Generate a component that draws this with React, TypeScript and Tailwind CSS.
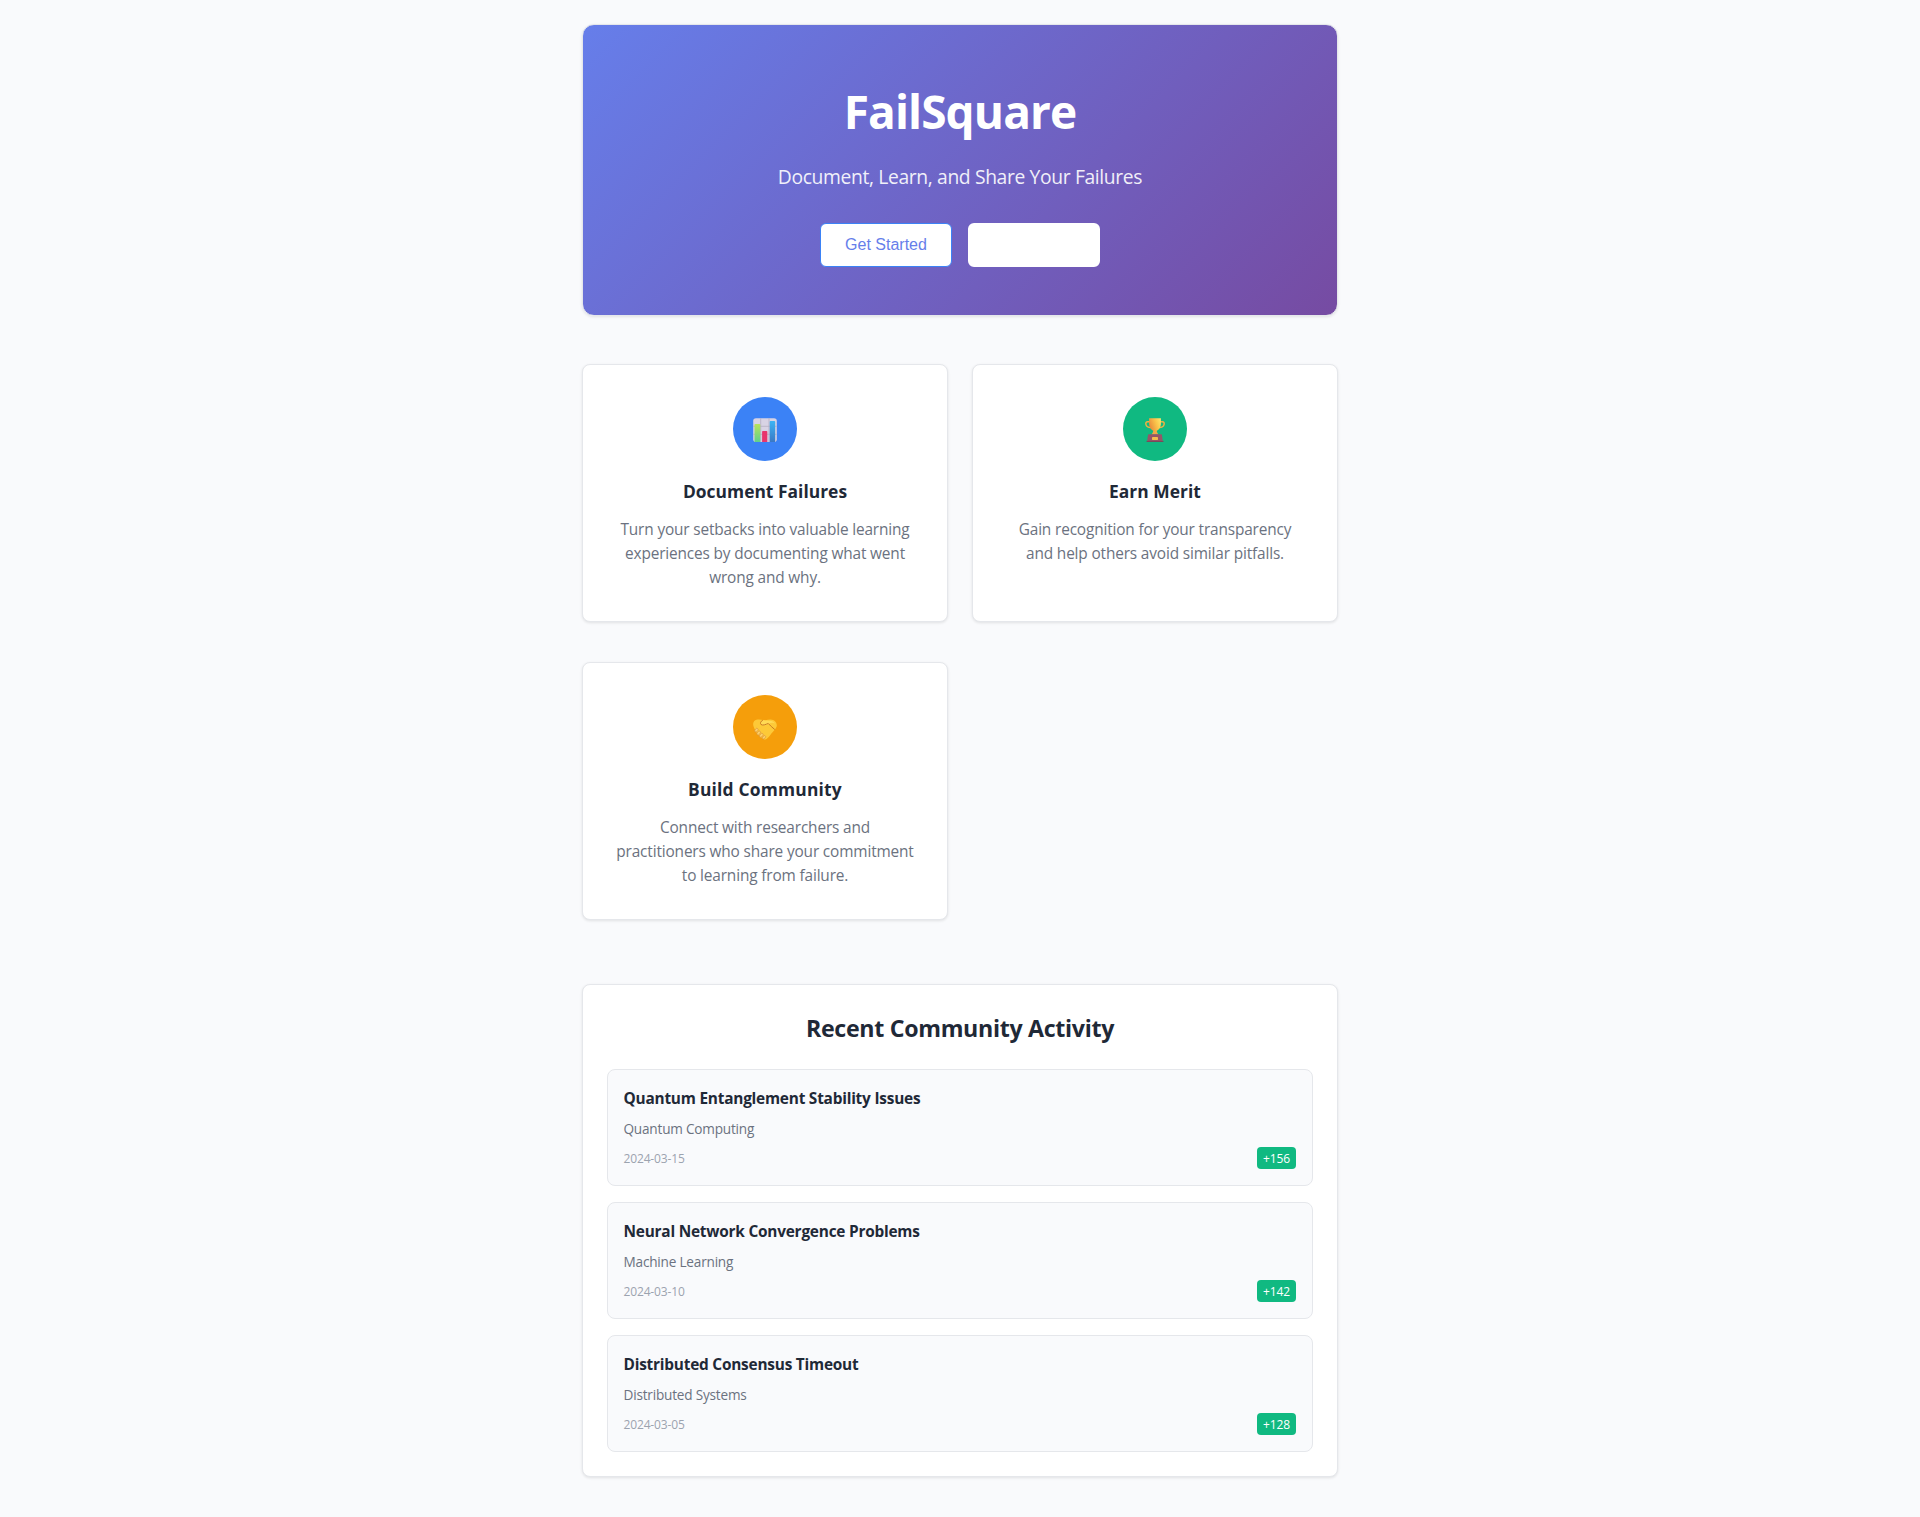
import React from 'react';

function ChartIcon() {
  return (
    <svg width="24" height="24" viewBox="0 0 24 24" aria-hidden="true">
      <defs>
        <linearGradient id="barGreen" x1="0" y1="0" x2="0" y2="1">
          <stop offset="0" stopColor="#b9e35a" />
          <stop offset="1" stopColor="#5fd08c" />
        </linearGradient>
        <linearGradient id="barBlue" x1="0" y1="0" x2="0" y2="1">
          <stop offset="0" stopColor="#3cb4f5" />
          <stop offset="1" stopColor="#3a78c4" />
        </linearGradient>
      </defs>
      <rect x="0.2" y="0.2" width="23.6" height="23.8" rx="2.8" fill="#d8d3e4" />
      <path d="M7.7 0.2V24M16 0.2V24M0.2 8.3H23.8M0.2 16.3H23.8" stroke="#b5afc2" strokeWidth="0.8" />
      <path d="M1.5 6.8a.8.8 0 0 1 .8-.8h4.2a.8.8 0 0 1 .8.8V24H1.5z" fill="url(#barGreen)" />
      <path d="M9.1 13.8a.8.8 0 0 1 .8-.8h3.6a.8.8 0 0 1 .8.8V24H9.1z" fill="#e8356c" />
      <path d="M16.7 3.8a.8.8 0 0 1 .8-.8h3.9a.8.8 0 0 1 .8.8V24h-5.5z" fill="url(#barBlue)" />
    </svg>
  );
}

function TrophyIcon() {
  return (
    <svg width="24" height="24" viewBox="0 0 24 24" aria-hidden="true">
      <defs>
        <linearGradient id="cup" x1="0" y1="0.6" x2="1" y2="0.2">
          <stop offset="0" stopColor="#e8893a" />
          <stop offset="0.6" stopColor="#fac54b" />
          <stop offset="1" stopColor="#fde46a" />
        </linearGradient>
      </defs>
      <path
        d="M6.8 3.7H4.6C3 3.7 2.6 5.2 2.9 6.4c.5 2 2.6 3.2 5 3.2M17.2 3.7h2.2c1.6 0 2 1.5 1.7 2.7-.5 2-2.6 3.2-5 3.2"
        fill="none"
        stroke="#eeb043"
        strokeWidth="1.5"
      />
      <path d="M10.4 11h3.2c0 2.7.5 3.8 1.9 5.5h-7c1.4-1.7 1.9-2.8 1.9-5.5z" fill="#f0a945" />
      <path d="M6.1.2h11.8v5.3c0 4.4-2.7 7.6-5.9 7.6s-5.9-3.2-5.9-7.6z" fill="url(#cup)" />
      <path d="M5.5 16.3h13c.7 0 1.2 7.5 1.4 7.5H4.1c.2 0 .7-7.5 1.4-7.5z" fill="#965568" />
      <path d="M3.5 22.9h17v1h-17z" fill="#7b4659" />
      <rect x="9" y="19" width="6" height="2.9" rx="0.4" fill="#f5bd4c" />
    </svg>
  );
}

function HandshakeIcon() {
  return (
    <svg width="24" height="24" viewBox="0 0 24 24" aria-hidden="true">
      <path
        d="M3.4 3.8C6 3 9.5 3.8 12 4.5c3-1 6.3-1.4 8.7-.3 2.5 1.2 3.6 4.4 2.9 6.5-.8 2.5-3.6 4.6-5.2 6.8-1.4 2-2.9 4-4.9 5.6-1 .8-2.3.5-3.5-.4-3-2.1-6.3-4.7-7.6-8C1.2 11.8-.1 9.6.2 7.5c.2-1.8 1.5-3.2 3.2-3.7z"
        fill="#fdc938"
      />
      <path
        d="M8.6 4.7c2.4-.9 5.5.2 7.6.1 2.8-.1 4.7.9 5.6 2.6-1.6-.7-3.4-.8-5.3.1-2.3 1.1-4.2 2.4-7 1.9-1.8-.4-2.5-2.9-.9-4.7z"
        fill="#ffda55"
      />
      <path
        d="M9.4 4.5C7.4 5.4 7 7.5 8 8.5c2 1.6 5.2-.5 7.3-1 1.7 2 4.2 4.1 6.2 5.8"
        fill="none"
        stroke="#c97a22"
        strokeWidth="1"
        strokeLinecap="round"
      />
      <g fill="#fdd069" stroke="#d98f38" strokeWidth="0.6">
        <rect x="-1.3" y="-2" width="2.6" height="4" rx="1.3" transform="translate(3.4 14.2) rotate(38)" />
        <rect x="-1.3" y="-2.2" width="2.6" height="4.4" rx="1.3" transform="translate(5.7 17) rotate(38)" />
        <rect x="-1.3" y="-2.2" width="2.6" height="4.4" rx="1.3" transform="translate(8.3 19.3) rotate(38)" />
        <rect x="-1.2" y="-1.9" width="2.4" height="3.8" rx="1.2" transform="translate(11 21.3) rotate(38)" />
      </g>
    </svg>
  );
}

const features = [
  {
    title: 'Document Failures',
    lines: ['Turn your setbacks into valuable learning', 'experiences by documenting what went', 'wrong and why.'],
    circle: 'bg-[#3b82f6]',
    tracking: 'tracking-[0.02px]',
    icon: <ChartIcon />,
  },
  {
    title: 'Earn Merit',
    lines: ['Gain recognition for your transparency', 'and help others avoid similar pitfalls.'],
    circle: 'bg-[#10b981]',
    tracking: 'tracking-[0.04px]',
    icon: <TrophyIcon />,
  },
  {
    title: 'Build Community',
    lines: ['Connect with researchers and', 'practitioners who share your commitment', 'to learning from failure.'],
    circle: 'bg-[#f59e0b]',
    tracking: 'tracking-[0.2px]',
    icon: <HandshakeIcon />,
  },
];

const activity = [
  { title: 'Quantum Entanglement Stability Issues', field: 'Quantum Computing', date: '2024-03-15', merit: '+156' },
  { title: 'Neural Network Convergence Problems', field: 'Machine Learning', date: '2024-03-10', merit: '+142' },
  { title: 'Distributed Consensus Timeout', field: 'Distributed Systems', date: '2024-03-05', merit: '+128' },
];

const cardShadow = 'shadow-[0_1px_3px_rgba(0,0,0,0.1)]';

export default function App() {
  return (
    <div className="min-h-[1517px] bg-[#f9fafc] pt-6 pb-10 font-['Open_Sans','Noto_Sans',sans-serif] text-[#1f2937]">
      <main className="mx-auto w-[756px]">
        <section className={`rounded-xl border border-[#e5e7eb] bg-[linear-gradient(135deg,#667eea_0%,#764ba2_100%)] py-12 text-center text-white ${cardShadow}`}>
          <h1 className="pt-1 text-[46px] leading-[68px] font-bold tracking-[-0.9px]">FailSquare</h1>
          <p className="mt-[17px] text-[19.3px] leading-[30px] tracking-[-0.36px] opacity-90">Document, Learn, and Share Your Failures</p>
          <div className="mt-[31px] flex items-center justify-center gap-4">
            <button className="h-11 w-[132px] rounded-md border border-[#3b82f6] bg-white font-['Liberation_Sans',Arial,sans-serif] text-base text-[#667eea]">
              Get Started
            </button>
            <button aria-label="Learn More" className="h-11 w-[132px] rounded-md border-2 border-white bg-white" />
          </div>
        </section>

        <section className="mt-12 grid grid-cols-2 gap-x-6 gap-y-10">
          {features.map((f) => (
            <article key={f.title} className={`flex h-[258px] flex-col items-center rounded-lg border border-[#e5e7eb] bg-white pt-8 text-center ${cardShadow}`}>
              <div className={`flex size-16 items-center justify-center rounded-full pt-0.5 ${f.circle}`}>{f.icon}</div>
              <h3 className={`mt-4 text-[17.4px] leading-7 font-bold ${f.tracking}`}>{f.title}</h3>
              <p className="mt-[13px] text-[15.4px] leading-6 tracking-[-0.15px] text-[#6b7280]">
                {f.lines.map((line) => (
                  <span key={line} className="block">{line}</span>
                ))}
              </p>
            </article>
          ))}
        </section>

        <section className={`mt-16 rounded-lg border border-[#e5e7eb] bg-white p-6 ${cardShadow}`}>
          <h2 className="pt-0.5 text-center text-[23.2px] leading-[34px] font-bold tracking-[-0.32px]">Recent Community Activity</h2>
          <div className="mt-6 flex flex-col gap-4">
            {activity.map((a) => (
              <article key={a.title} className="rounded-lg border border-[#e5e7eb] bg-[#f9fafc] px-[15.5px] pt-[17px] pb-4">
                <h4 className="text-[15.4px] leading-6 font-bold tracking-[-0.22px]">{a.title}</h4>
                <p className="mt-[7px] text-[13.6px] leading-[21px] tracking-[-0.2px] text-[#6b7280]">{a.field}</p>
                <div className="mt-2 flex items-center justify-between text-[12px] leading-[18px] tracking-[-0.15px]">
                  <span className="pt-0.5 text-[#9ca3af]">{a.date}</span>
                  <span className="mr-[0.5px] w-[39px] rounded bg-[#10b981] pt-[3px] pb-px text-center text-white">{a.merit}</span>
                </div>
              </article>
            ))}
          </div>
        </section>
      </main>
    </div>
  );
}
